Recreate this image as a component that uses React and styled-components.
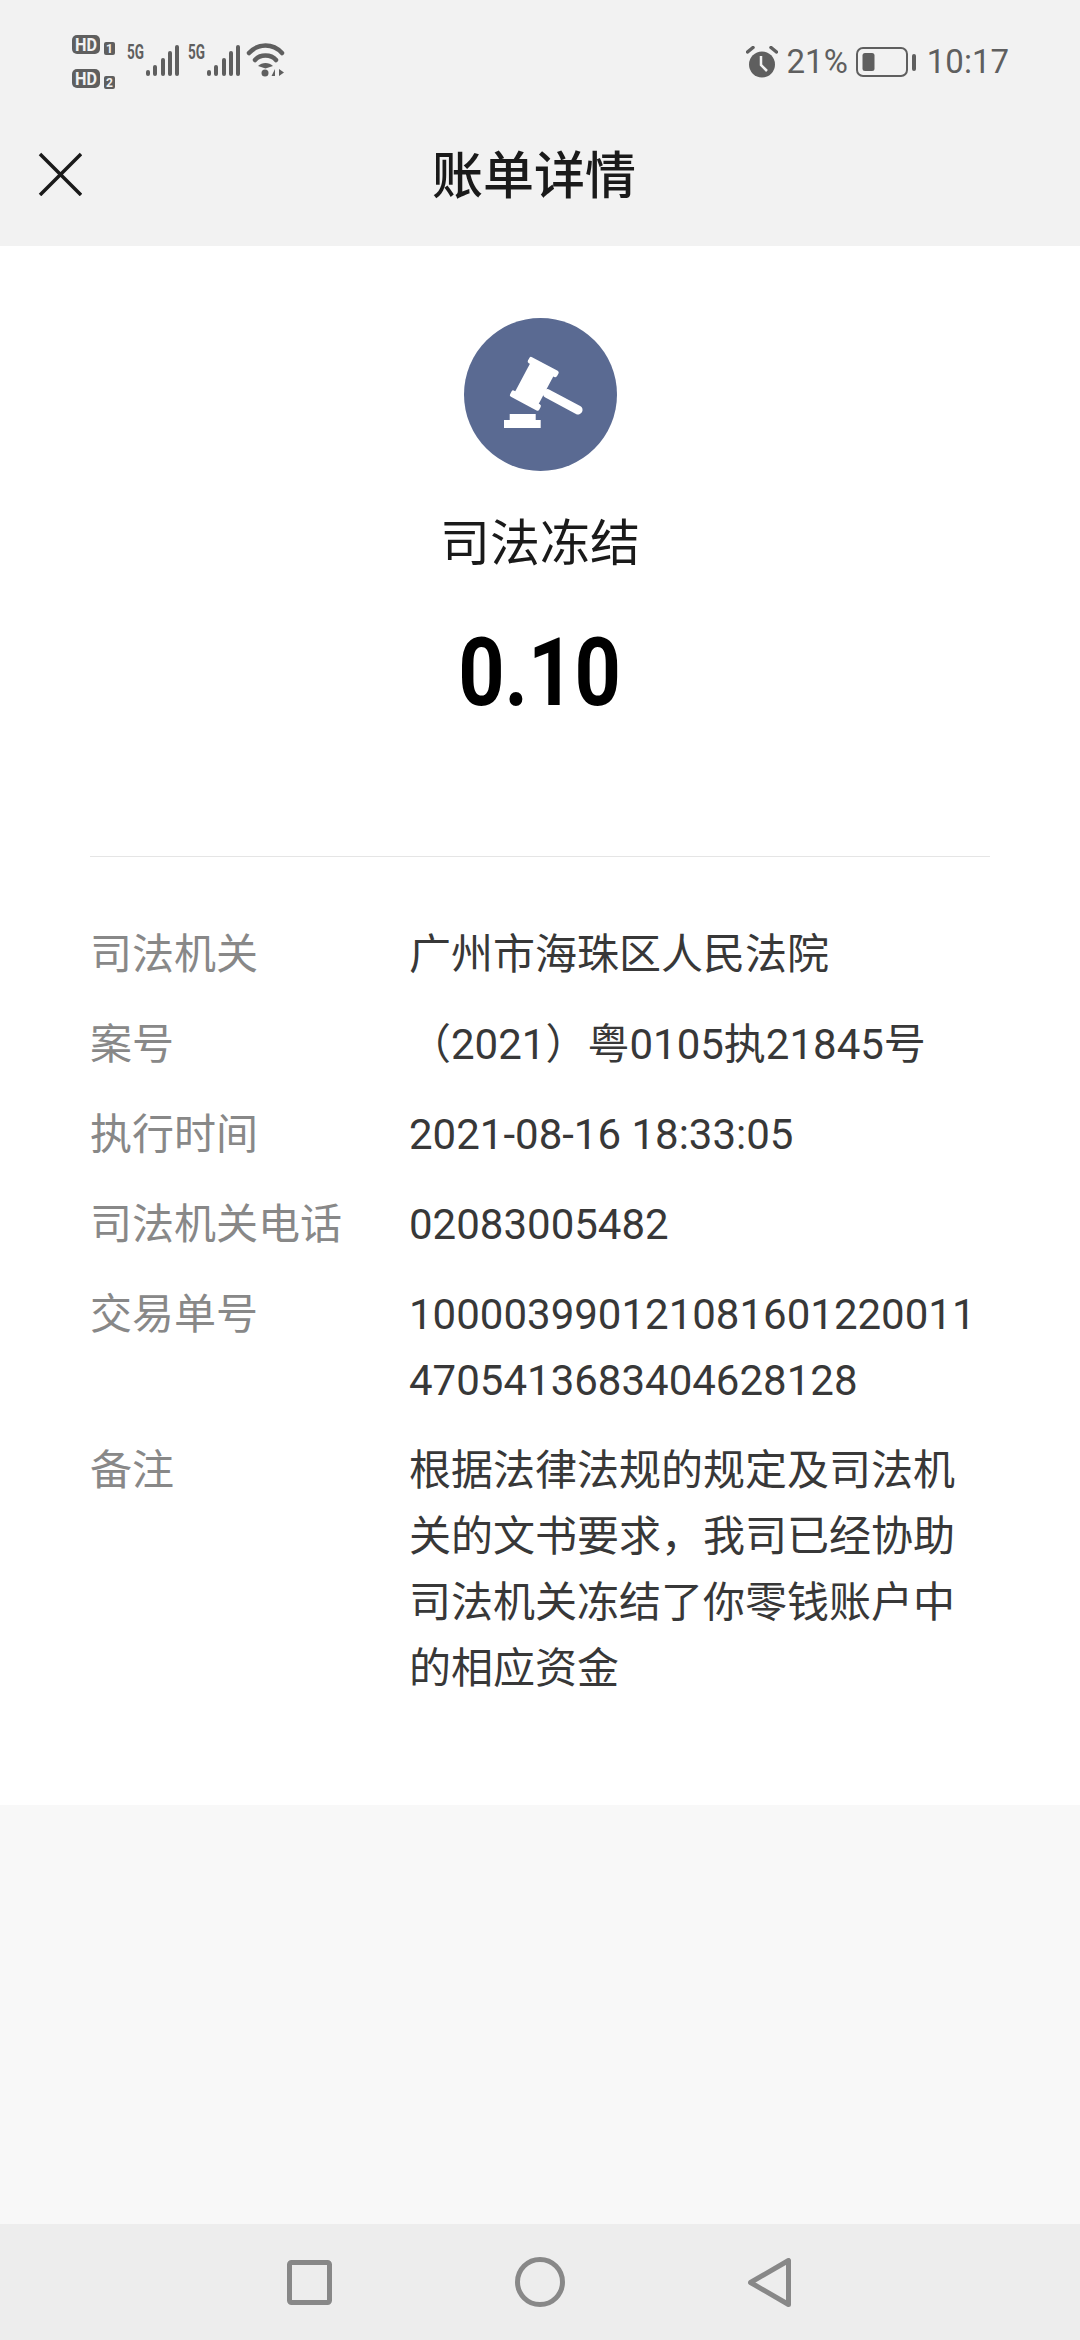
import React from "react";
import styled, { createGlobalStyle } from "styled-components";

const GlobalStyle = createGlobalStyle`
  html, body {
    margin: 0;
    padding: 0;
    background: #f8f8f8;
  }
  * {
    box-sizing: border-box;
  }
`;

const fontStack = `Roboto, "Noto Sans CJK SC", sans-serif`;

const Page = styled.div`
  width: 1080px;
  height: 2340px;
  display: flex;
  flex-direction: column;
  background: #f8f8f8;
  font-family: ${fontStack};
`;

const Top = styled.div`
  background: #f2f2f2;
  height: 246px;
  flex: none;
`;

const StatusBar = styled.div`
  height: 108px;
  display: flex;
  align-items: flex-start;
  justify-content: space-between;
  padding: 30px 71px 0 70px;
  color: #5f5f5f;
`;

const StatusLeft = styled.svg`
  display: block;
  fill: #5f5f5f;
`;

const StatusRight = styled.div`
  display: flex;
  align-items: center;
  height: 62px;
  padding-top: 1px;
  font-size: 33px;
  line-height: 62px;
`;

const Percent = styled.span`
  margin-left: 9px;
  margin-right: 8px;
`;

const Clock = styled.span`
  margin-left: 11px;
`;

const Header = styled.div`
  height: 138px;
  display: flex;
  align-items: center;
  padding-left: 38px;
`;

const CloseButton = styled.svg`
  display: block;
  flex: none;
  margin-bottom: 6px;
`;

const Title = styled.div`
  margin-left: 350px;
  font-size: 51px;
  font-weight: 500;
  color: #1a1a1a;
  line-height: 70px;
`;

const Card = styled.div`
  background: #fff;
  height: 1559px;
  flex: none;
  padding: 72px 90px 0;
`;

const Summary = styled.div`
  display: flex;
  flex-direction: column;
  align-items: center;
  height: 539px;
  border-bottom: 1px solid #e5e5e5;
`;

const Badge = styled.div`
  width: 153px;
  height: 153px;
  border-radius: 50%;
  background: #5a6a92;
  display: flex;
  align-items: center;
  justify-content: center;
`;

const SummaryLabel = styled.div`
  margin-top: 38px;
  font-size: 50px;
  line-height: 70px;
  color: #1a1a1a;
`;

const Amount = styled.div`
  margin-top: 39px;
  font-size: 94px;
  line-height: 110px;
  font-weight: 700;
  color: #000;
  transform: scaleX(0.86);
`;

const Details = styled.div`
  display: flex;
  flex-direction: column;
  gap: 24px;
  padding-top: 65px;
`;

const Row = styled.div`
  display: flex;
  font-size: 42px;
  line-height: 66px;
`;

const Label = styled.div`
  width: 319px;
  flex: none;
  color: #888;
`;

const Value = styled.div`
  width: 572px;
  flex: none;
  color: #383838;
  word-break: break-all;
`;

const NavBar = styled.div`
  margin-top: auto;
  height: 116px;
  background: #ededed;
  display: flex;
  align-items: center;
  padding-left: 287px;
  gap: 183px;
`;

const NavIcon = styled.svg`
  display: block;
  flex: none;
  fill: none;
  stroke: #888;
  stroke-width: 5;
  stroke-linejoin: round;
`;

const rows = [
  ["司法机关", "广州市海珠区人民法院"],
  ["案号", "（2021）粤0105执21845号"],
  ["执行时间", "2021-08-16 18:33:05"],
  ["司法机关电话", "02083005482"],
  ["交易单号", "1000039901210816012200114705413683404628128"],
  ["备注", "根据法律法规的规定及司法机关的文书要求，我司已经协助司法机关冻结了你零钱账户中的相应资金"],
];

function HdBadge({ y, n }) {
  return (
    <g transform={`translate(2 ${y})`}>
      <rect width="28" height="19" rx="5" />
      <text x="14" y="15.500" fontSize="18" fontWeight="700" fill="#f2f2f2" textAnchor="middle" fontFamily="Roboto, sans-serif" textLength="22" lengthAdjust="spacingAndGlyphs">HD</text>
      <rect x="32" y="7" width="11" height="13" rx="2" />
      <text x="37.500" y="18" fontSize="12" fontWeight="700" fill="#f2f2f2" textAnchor="middle" fontFamily="Roboto, sans-serif">{n}</text>
    </g>
  );
}

function Signal({ x }) {
  const bars = [[0, 6], [7, 11], [15, 18], [22, 25], [29, 31]];
  return (
    <g transform={`translate(${x} 0)`}>
      <text x="0" y="29" fontSize="20" fontWeight="700" fontFamily="Roboto, sans-serif" textLength="17" lengthAdjust="spacingAndGlyphs">5G</text>
      {bars.map(([bx, h]) => (
        <rect key={bx} x={bx + 19} y={46 - h} width="4" height={h} rx="2" />
      ))}
    </g>
  );
}

function LeftIcons() {
  return (
    <StatusLeft width="222" height="62" viewBox="0 0 222 62">
      <HdBadge y={5} n="1" />
      <HdBadge y={39} n="2" />
      <Signal x={57} />
      <Signal x={118} />
      <g fill="none" stroke="#5f5f5f" strokeWidth="4.500" strokeLinecap="round">
        <path d="M179 23 C188 13 203 13 212 23" />
        <path d="M185 30 C190 24 201 24 206 30" />
      </g>
      <path d="M188 36 C192 32 199 32 203 36 L195.500 38.500 Z" />
      <circle cx="195" cy="43" r="3.500" />
      <path d="M205 46 V39 L201.500 46 Z M209 39 V46 L214 42.500 Z" />
    </StatusLeft>
  );
}

function AlarmIcon() {
  return (
    <svg width="32" height="32" viewBox="0 0 32 32">
      <circle cx="16" cy="18.500" r="13" fill="#5f5f5f" />
      <path d="M15 10 V19 L21 25" fill="none" stroke="#f2f2f2" strokeWidth="2.500" />
      <path d="M1.500 6 L7 1.500 M30.500 6 L25 1.500" stroke="#5f5f5f" strokeWidth="3.500" strokeLinecap="round" />
    </svg>
  );
}

function BatteryIcon() {
  return (
    <svg width="60" height="30" viewBox="0 0 60 30">
      <rect x="1" y="1" width="50" height="28" rx="6" fill="none" stroke="#5f5f5f" strokeWidth="2" />
      <rect x="6.500" y="6" width="12" height="18" rx="2.500" fill="#5f5f5f" />
      <rect x="56" y="7" width="4" height="17" rx="2" fill="#5f5f5f" />
    </svg>
  );
}

function GavelIcon() {
  return (
    <svg width="153" height="153" viewBox="0 0 153 153">
      <g fill="#fff">
        <g transform="rotate(28 70.300 65.800)">
          <rect x="53.800" y="43.300" width="33" height="7" rx="2" />
          <rect x="57" y="47" width="26.600" height="38" />
          <rect x="53.800" y="81.300" width="33" height="7" rx="2" />
          <rect x="82" y="63.800" width="43.700" height="9" rx="4.500" />
        </g>
        <path d="M45.700 96 H71.700 V102 H76.700 V110 H40 V102 H45.700 Z" />
      </g>
    </svg>
  );
}

export default function App() {
  return (
    <Page>
      <GlobalStyle />
      <Top>
        <StatusBar>
          <LeftIcons />
          <StatusRight>
            <AlarmIcon />
            <Percent>21%</Percent>
            <BatteryIcon />
            <Clock>10:17</Clock>
          </StatusRight>
        </StatusBar>
        <Header>
          <CloseButton width="44" height="44" viewBox="0 0 44 44">
            <path d="M2 2 L43 43 M43 2 L2 43" stroke="#1a1a1a" strokeWidth="3.500" fill="none" />
          </CloseButton>
          <Title>账单详情</Title>
        </Header>
      </Top>
      <Card>
        <Summary>
          <Badge>
            <GavelIcon />
          </Badge>
          <SummaryLabel>司法冻结</SummaryLabel>
          <Amount>0.10</Amount>
        </Summary>
        <Details>
          {rows.map(([label, value]) => (
            <Row key={label}>
              <Label>{label}</Label>
              <Value>{value}</Value>
            </Row>
          ))}
        </Details>
      </Card>
      <NavBar>
        <NavIcon width="45" height="45" viewBox="0 0 45 45">
          <rect x="2.500" y="2.500" width="40" height="40" rx="2" />
        </NavIcon>
        <NavIcon width="50" height="50" viewBox="0 0 50 50">
          <circle cx="25" cy="25" r="22.500" />
        </NavIcon>
        <NavIcon width="43" height="49" viewBox="0 0 43 49">
          <path d="M40.500 2.500 V46.500 L2.500 24.500 Z" />
        </NavIcon>
      </NavBar>
    </Page>
  );
}
